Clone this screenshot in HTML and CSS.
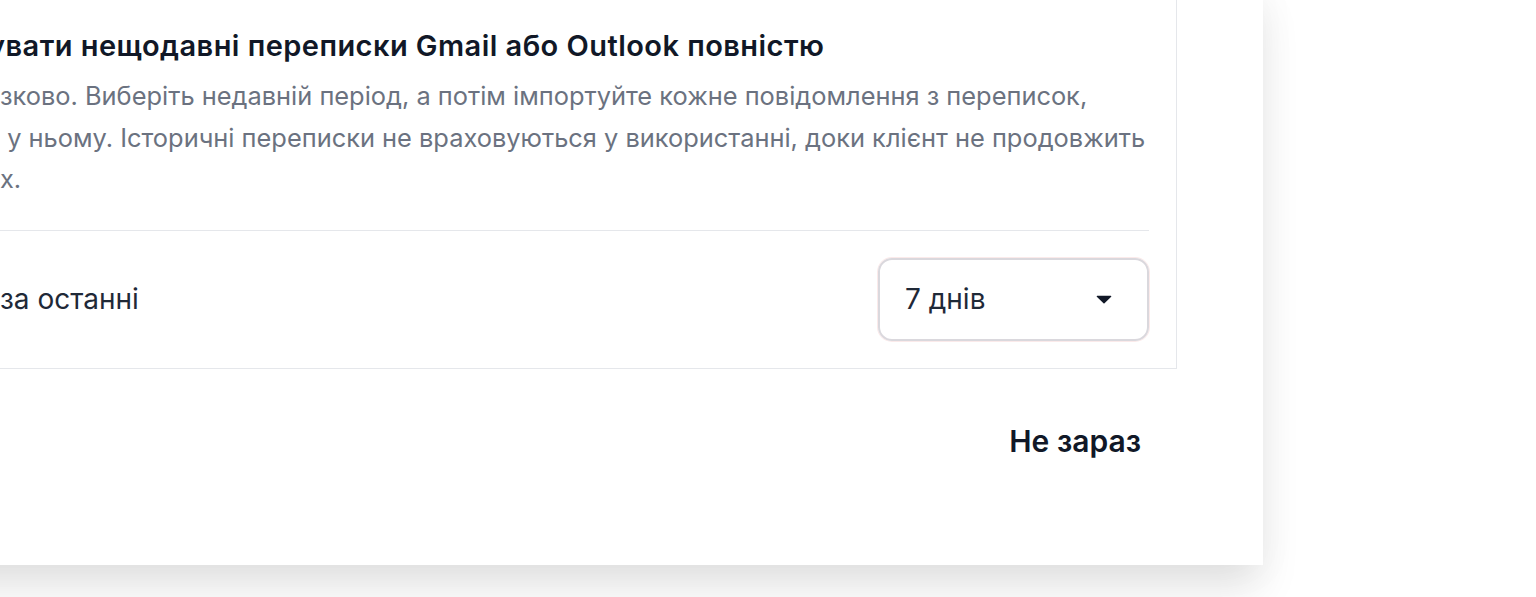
FILE: index.html
```html
<!DOCTYPE html>
<html lang="uk">
<head>
    <meta charset="UTF-8">
    <meta name="viewport" content="width=device-width, initial-scale=1.0">
    <title>Імпорт переписок</title>
    <link rel="stylesheet" href="styles.css">
</head>
<body>
    <div class="modal">
        <div class="card">
            <h3 class="title"><span class="cut">у</span>вати нещодавні переписки Gmail або Outlook повністю</h3>
            <p class="desc">зково. Виберіть недавній період, а потім імпортуйте кожне повідомлення з переписок,<br>&nbsp;у ньому. Історичні переписки не враховуються у використанні, доки клієнт не продовжить<br>х.</p>
            <div class="row">
                <span class="label">за останні</span>
                <div class="select">
                    <span>7 днів</span>
                    <svg class="caret" width="16" height="9" viewBox="0 0 16 9">
                        <path d="M1.2 0.8h13.6a0.6 0.6 0 0 1 0.4 1L8.5 8.2a0.7 0.7 0 0 1-1 0L0.8 1.8a0.6 0.6 0 0 1 0.4-1z" fill="#111827"/>
                    </svg>
                </div>
            </div>
        </div>
        <div class="footer">
            <button class="btn">Не зараз</button>
        </div>
    </div>
</body>
</html>
```

FILE: styles.css
```css
html, body{
    margin: 0;
    height: 100%;
    background: #fff;
    overflow: hidden;
    font-family: Inter, "Noto Sans", sans-serif;
}
.modal{
    width: 1330px;
    margin-left: -67px;
    margin-top: -20px;
    padding: 0 86px 0 38px;
    box-sizing: border-box;
    background: #fff;
    box-shadow: 0 26px 40px -4px rgba(0,0,0,0.11), 0 6px 40px rgba(0,0,0,0.035);
}
.card{
    border: 1px solid #e5e7eb;
    border-top: none;
    padding: 46px 27px 27px 28px;
}
.title{
    margin: 0;
    font-size: 29px;
    line-height: 40px;
    font-weight: 600;
    letter-spacing: 0.45px;
    color: #111827;
    white-space: nowrap;
}
.cut{
    margin-left: -12px;
}
.desc{
    margin: 9px 0 0;
    padding-bottom: 30px;
    border-bottom: 1px solid #e5e7eb;
    font-size: 25.4px;
    line-height: 41.6px;
    color: #6b7280;
    white-space: nowrap;
}
.row{
    display: flex;
    align-items: center;
    justify-content: space-between;
    padding-top: 27px;
}
.label{
    font-size: 28px;
    color: #1f2937;
}
.select{
    display: flex;
    align-items: center;
    justify-content: space-between;
    width: 271px;
    height: 83px;
    box-sizing: border-box;
    padding: 0 35px 0 25px;
    border: 2px solid #dad8dd;
    border-radius: 14px;
    box-shadow: 0 0 0 1px #fbeaea;
    font-size: 28px;
    color: #1f2937;
}
.footer{
    display: flex;
    justify-content: flex-end;
    padding: 40px 0 92px;
}
.btn{
    margin-right: -86px;
    padding: 12px 122px 12px 36px;
    border: none;
    background: none;
    font-family: inherit;
    font-size: 30px;
    line-height: 40px;
    font-weight: 600;
    color: #111827;
}
```
